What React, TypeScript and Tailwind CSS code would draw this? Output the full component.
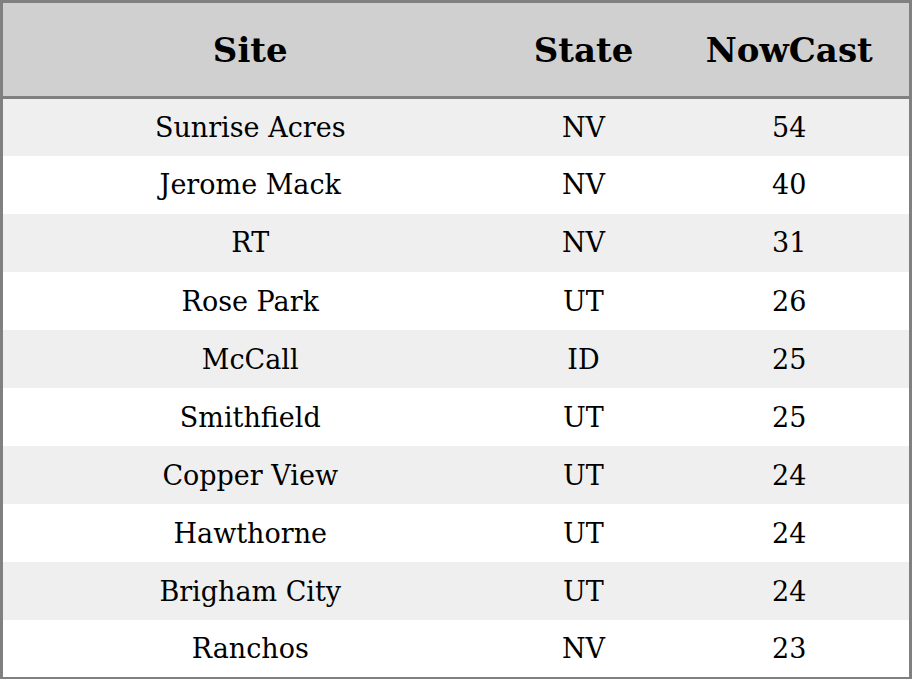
const rows = [
  { site: 'Sunrise Acres', state: 'NV', nowcast: 54 },
  { site: 'Jerome Mack', state: 'NV', nowcast: 40 },
  { site: 'RT', state: 'NV', nowcast: 31 },
  { site: 'Rose Park', state: 'UT', nowcast: 26 },
  { site: 'McCall', state: 'ID', nowcast: 25 },
  { site: 'Smithfield', state: 'UT', nowcast: 25 },
  { site: 'Copper View', state: 'UT', nowcast: 24 },
  { site: 'Hawthorne', state: 'UT', nowcast: 24 },
  { site: 'Brigham City', state: 'UT', nowcast: 24 },
  { site: 'Ranchos', state: 'NV', nowcast: 23 },
];

export default function App() {
  return (
    <div className="w-[912px] h-[679px] bg-white font-['DejaVu_Serif',serif] text-black">
      <table className="w-full border-collapse border-[3px] border-[#808080] table-fixed">
        <colgroup>
          <col className="w-[496px]" />
          <col className="w-[172px]" />
          <col />
        </colgroup>
        <thead>
          <tr className="h-[96px] bg-[#d0d0d0] border-b-[3px] border-[#808080]">
            <th className="text-[34px] font-bold text-center p-0 pt-[2px]">Site</th>
            <th className="text-[34px] font-bold text-center p-0 pt-[2px]">State</th>
            <th className="text-[34px] font-bold text-center p-0 pt-[2px]">NowCast</th>
          </tr>
        </thead>
        <tbody>
          {rows.map((r, i) => (
            <tr key={r.site} className={`h-[58.1px] ${i % 2 === 0 ? 'bg-[#efefef]' : 'bg-white'}`}>
              <td className="text-[27px] text-center p-0 pt-[2px]">{r.site}</td>
              <td className="text-[27px] text-center p-0 pt-[2px]">{r.state}</td>
              <td className="text-[27px] text-center p-0 pt-[2px]">{r.nowcast}</td>
            </tr>
          ))}
        </tbody>
      </table>
    </div>
  );
}
